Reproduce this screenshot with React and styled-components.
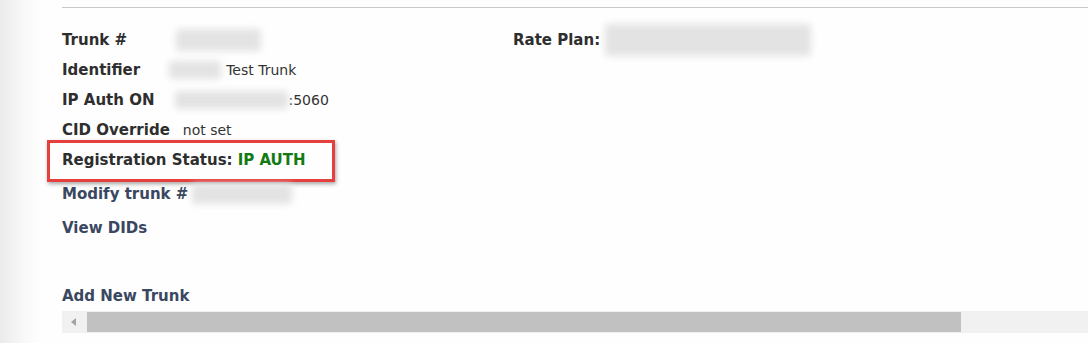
import styled, { createGlobalStyle } from "styled-components";

const GlobalStyle = createGlobalStyle`
  html, body {
    margin: 0;
    padding: 0;
    background: #fefefe;
  }
  body {
    font-family: "DejaVu Sans", Verdana, sans-serif;
    color: #333;
  }
`;

const Page = styled.div`
  display: flex;
  width: 1088px;
  height: 343px;
  overflow: hidden;
`;

const Gutter = styled.div`
  width: 40px;
  flex: none;
  background: linear-gradient(to right, #ebebeb, #f8f8f8 60%, #fefefe);
`;

const Main = styled.div`
  flex: 1;
  display: flex;
  flex-direction: column;
  padding: 0 0 0 22px;
`;

const Rule = styled.div`
  height: 1px;
  background: #c9c9c9;
  margin-top: 7px;
`;

const Body = styled.div`
  display: flex;
  margin-top: 16.5px;
`;

const Details = styled.div`
  width: 451px;
  display: flex;
  flex-direction: column;
`;

const Row = styled.div`
  display: flex;
  align-items: center;
  height: 30px;
  margin-top: ${({ $top }) => $top || 0}px;
  font-size: 15px;
`;

const Label = styled.span`
  font-weight: bold;
  color: #2e2e2e;
  white-space: nowrap;
`;

const LinkText = styled.a`
  font-weight: bold;
  color: #3a4760;
  text-decoration: none;
  white-space: nowrap;
  cursor: pointer;
`;

const Value = styled.span`
  font-size: 14px;
  color: #333;
  margin-left: ${({ $gap }) => $gap || 0}px;
  white-space: nowrap;
`;

const Status = styled.span`
  font-weight: bold;
  color: #137a13;
  margin-left: 5px;
`;

const Redacted = styled.span`
  display: inline-block;
  width: ${({ $w }) => $w}px;
  height: ${({ $h }) => $h || 20}px;
  margin-left: ${({ $gap }) => $gap || 0}px;
  background: #e3e3e3;
  filter: blur(3.5px);
  border-radius: 3px;
`;

const Highlight = styled.div`
  position: relative;
  &::before {
    content: "";
    box-sizing: border-box;
    position: absolute;
    left: -15px;
    top: -4.5px;
    width: 288px;
    height: 42px;
    border: 3.5px solid #e5403e;
    box-shadow: 1px 2px 4px rgba(0, 0, 0, 0.35);
    pointer-events: none;
  }
`;

const Side = styled.div`
  display: flex;
  align-items: center;
  height: 30px;
  font-size: 15px;
`;

const Scrollbar = styled.div`
  display: flex;
  align-items: center;
  height: 22px;
  background: #f1f1f1;
`;

const Arrow = styled.div`
  width: 0;
  height: 0;
  margin: 0 11px 0 9px;
  border-top: 4.5px solid transparent;
  border-bottom: 4.5px solid transparent;
  border-right: 5px solid #a3a3a3;
`;

const Thumb = styled.div`
  width: 874px;
  height: 20px;
  background: #c1c1c1;
`;

export default function App() {
  return (
    <>
      <GlobalStyle />
      <Page>
        <Gutter />
        <Main>
          <Rule />
          <Body>
            <Details>
              <Row>
                <Label>Trunk #</Label>
                <Redacted $w={85} $h={22} $gap={49} />
              </Row>
              <Row>
                <Label>Identifier</Label>
                <Redacted $w={52} $h={18} $gap={29} />
                <Value $gap={5}>Test Trunk</Value>
              </Row>
              <Row>
                <Label>IP Auth ON</Label>
                <Redacted $w={113} $h={18} $gap={21} />
                <Value>:5060</Value>
              </Row>
              <Row>
                <Label>CID Override</Label>
                <Value $gap={13}>not set</Value>
              </Row>
              <Highlight>
                <Row>
                  <Label>Registration Status:</Label>
                  <Status>IP AUTH</Status>
                </Row>
              </Highlight>
              <Row $top={4}>
                <LinkText>Modify trunk #</LinkText>
                <Redacted $w={100} $h={20} $gap={4} />
              </Row>
              <Row $top={4.5}>
                <LinkText>View DIDs</LinkText>
              </Row>
              <Row $top={38}>
                <LinkText>Add New Trunk</LinkText>
              </Row>
            </Details>
            <Side>
              <Label>Rate Plan:</Label>
              <Redacted $w={206} $h={32} $gap={5} />
            </Side>
          </Body>
          <Scrollbar>
            <Arrow />
            <Thumb />
          </Scrollbar>
        </Main>
      </Page>
    </>
  );
}
